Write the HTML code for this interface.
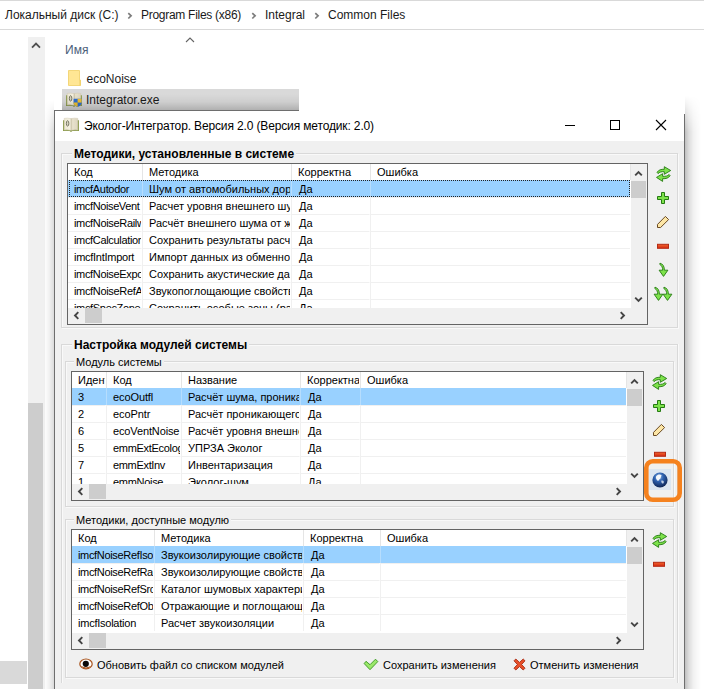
<!DOCTYPE html>
<html lang="ru">
<head>
<meta charset="utf-8">
<title>Эколог-Интегратор</title>
<style>
html,body{margin:0;padding:0;}
body{width:704px;height:689px;position:relative;overflow:hidden;background:#fff;font-family:"Liberation Sans",sans-serif;color:#000;}
.abs{position:absolute;}
.t{position:absolute;white-space:pre;line-height:1;}
/* explorer */
.ex{font-size:12px;color:#1a1a1a;}
/* dialog */
#dlg{position:absolute;left:55px;top:111px;width:629px;height:578px;background:#f0f0f0;}
.d{font-size:11px;}
.b{font-size:12px;font-weight:bold;}
.grp{position:absolute;box-sizing:border-box;border:1px solid #d9d9d9;box-shadow:1px 1px 0 rgba(255,255,255,.6), inset 1px 1px 0 rgba(255,255,255,.6);}
.lbl{position:absolute;background:#f0f0f0;white-space:pre;line-height:1;}
.lv{position:absolute;box-sizing:border-box;border:1px solid #646464;background:#fff;overflow:hidden;}
.lv .hd,.lv .r{position:absolute;left:0;height:17px;}
.lv .c{position:absolute;top:0;height:17px;box-sizing:border-box;overflow:hidden;white-space:pre;font-size:11px;line-height:17px;padding-left:6px;}
.lv .hd .c{border-right:1px solid #fff;box-shadow:1px 0 0 #e5e5e5;height:17px;line-height:16px;}
.lv .r .c{border-right:1px solid #fff;box-shadow:1px 0 0 #f0f0f0;border-top:1px solid #f0f0f0;line-height:16px;}
.fr{position:absolute;box-sizing:border-box;border:1px dotted #222;}
.lv .r.sel .c{background:#99d1ff;border-color:#99d1ff;box-shadow:1px 0 0 #b6ddfd;}
.sbv{position:absolute;top:0;width:16px;background:#f0f0f0;}
.sbh{position:absolute;left:0;height:16px;background:#f0f0f0;}
.th{position:absolute;background:#cdcdcd;}
svg{position:absolute;overflow:visible;}
</style>
</head>
<body>

<!-- ===== Explorer background ===== -->
<div class="abs" style="left:0;top:0;width:704px;height:1px;background:#d9d9d9"></div>
<div class="abs" style="left:0;top:29px;width:704px;height:1px;background:#d9d9d9"></div>
<div class="t ex" style="left:5px;top:9px;">Локальный диск (C:)</div>
<div class="t ex" style="left:141px;top:9px;letter-spacing:-0.28px">Program Files (x86)</div>
<div class="t ex" style="left:265px;top:9px;">Integral</div>
<div class="t ex" style="left:328px;top:9px;">Common Files</div>
<svg style="left:126.5px;top:11.8px" width="6" height="8" viewBox="0 0 6 8"><path d="M1.3 1.1 L4.1 3.8 L1.3 6.5" fill="none" stroke="#7c7c7c" stroke-width="1.7"/></svg>
<svg style="left:251.4px;top:11.8px" width="6" height="8" viewBox="0 0 6 8"><path d="M1.3 1.1 L4.1 3.8 L1.3 6.5" fill="none" stroke="#7c7c7c" stroke-width="1.7"/></svg>
<svg style="left:313.8px;top:11.8px" width="6" height="8" viewBox="0 0 6 8"><path d="M1.3 1.1 L4.1 3.8 L1.3 6.5" fill="none" stroke="#7c7c7c" stroke-width="1.7"/></svg>

<!-- left scrollbar -->
<div class="abs" style="left:28px;top:37px;width:17px;height:652px;background:#f0f0f0"></div>
<div class="abs" style="left:28px;top:403px;width:15px;height:286px;background:#cdcdcd"></div>
<svg style="left:31px;top:42px" width="10" height="7" viewBox="0 0 10 7"><path d="M1 5.6 L5 1.6 L9 5.6" fill="none" stroke="#505050" stroke-width="1.8"/></svg>
<div class="abs" style="left:0;top:661px;width:27px;height:23px;background:#d9d9d9"></div>

<!-- column header -->
<div class="t ex" style="left:65px;top:44px;color:#4c607a;">Имя</div>
<svg style="left:184.7px;top:36.8px" width="10" height="6" viewBox="0 0 10 6"><path d="M1 5 L5 1 L9 5" fill="none" stroke="#646464" stroke-width="1.1"/></svg>

<!-- folder row -->
<svg style="left:68px;top:70px" width="13" height="16" viewBox="0 0 13 16"><path d="M0.5 0.5 H11.5 V10 H12.5 V15.5 H0.5 Z" fill="#ffe694" stroke="#f3d679" stroke-width="1"/><path d="M11.5 10 H12.5 V15.5 H11.5Z" fill="#f0cd62"/></svg>
<div class="t ex" style="left:86.5px;top:73px;">ecoNoise</div>

<!-- selected file row -->
<div class="abs" style="left:62px;top:89px;width:237px;height:21px;background:#d9d9d9"></div>
<svg style="left:66px;top:92.6px" width="16" height="14" viewBox="0 0 16 14">
  <defs><linearGradient id="bk1" x1="0" y1="0" x2="1" y2="0"><stop offset="0" stop-color="#ece7d2"/><stop offset="0.42" stop-color="#f4f0e0"/><stop offset="0.52" stop-color="#cdc6ac"/><stop offset="0.62" stop-color="#e8e2cc"/><stop offset="1" stop-color="#dcd5be"/></linearGradient></defs>
  <path d="M0 2.2 H16 V13 H9.4 L8 13.9 L6.6 13 H0 Z" fill="#8b9b4b"/>
  <path d="M1.2 0.4 Q4.6 -0.2 8 0.6 Q11.4 -0.2 14.8 0.4 V12 Q11.4 11.6 8 12.3 Q4.6 11.6 1.2 12 Z" fill="url(#bk1)" stroke="#cfc6b0" stroke-width="0.5"/>
  <ellipse cx="4.6" cy="5.4" rx="1.25" ry="2.7" fill="#d9d5c0" stroke="#6c6c5a" stroke-width="0.9"/>
  <path d="M7.6 5.8 H15.6 V10 Q15.4 12.6 11.6 13.9 Q7.8 12.6 7.6 10 Z" fill="#2f6fd0"/>
  <path d="M11.6 5.8 H15.6 V9.6 H11.6 Z" fill="#f2c230"/><path d="M7.6 9.6 H11.6 V13.9 Q7.9 12.6 7.6 9.9 Z" fill="#f2c230"/>
</svg>
<div class="t ex" style="left:86px;top:94px;">Integrator.exe</div>

<!-- ===== Dialog ===== -->
<div class="abs" style="left:685px;top:96px;width:16px;height:593px;background:linear-gradient(to right,rgba(0,0,0,.25),rgba(0,0,0,.13) 25%,rgba(0,0,0,.05) 55%,rgba(0,0,0,0));-webkit-mask-image:linear-gradient(to bottom,transparent,#000 36px);mask-image:linear-gradient(to bottom,transparent,#000 36px)"></div>
<div class="abs" style="left:44px;top:100px;width:10px;height:589px;background:linear-gradient(to left,rgba(0,0,0,.14),rgba(0,0,0,.05) 50%,rgba(0,0,0,0));-webkit-mask-image:linear-gradient(to bottom,transparent,#000 30px);mask-image:linear-gradient(to bottom,transparent,#000 30px)"></div>
<div class="abs" style="left:54px;top:94px;width:245px;height:16px;background:linear-gradient(to bottom,rgba(0,0,0,0),rgba(0,0,0,.05) 50%,rgba(0,0,0,.19))"></div>
<div class="abs" style="left:54px;top:94px;width:8px;height:16px;background:#fff"></div>
<div class="abs" style="left:54px;top:110px;width:245px;height:1px;background:#6e6e6e"></div>
<div class="abs" style="left:54px;top:110px;width:1px;height:579px;background:#6e6e6e"></div>
<div class="abs" style="left:684px;top:114px;width:1px;height:575px;background:#6e6e6e"></div>
<div id="dlg"></div>
<div class="abs" style="left:55px;top:111px;width:629px;height:30px;background:#fff"></div>
<svg style="left:63px;top:118px" width="16" height="14" viewBox="0 0 16 14">
  <defs><linearGradient id="bk2" x1="0" y1="0" x2="1" y2="0"><stop offset="0" stop-color="#ece7d2"/><stop offset="0.42" stop-color="#f4f0e0"/><stop offset="0.52" stop-color="#cdc6ac"/><stop offset="0.62" stop-color="#e8e2cc"/><stop offset="1" stop-color="#dcd5be"/></linearGradient></defs>
  <path d="M0 2.2 H16 V13 H9.4 L8 13.9 L6.6 13 H0 Z" fill="#8b9b4b"/>
  <path d="M1.2 0.4 Q4.6 -0.2 8 0.6 Q11.4 -0.2 14.8 0.4 V12 Q11.4 11.6 8 12.3 Q4.6 11.6 1.2 12 Z" fill="url(#bk2)" stroke="#cfc6b0" stroke-width="0.5"/>
  <ellipse cx="4.6" cy="5.4" rx="1.25" ry="2.7" fill="#d9d5c0" stroke="#6c6c5a" stroke-width="0.9"/>
</svg>
<div class="t" style="left:84px;top:120.4px;font-size:12px;letter-spacing:-0.14px">Эколог-Интегратор. Версия 2.0 (Версия методик: 2.0)</div>
<div class="abs" style="left:565px;top:125px;width:10px;height:1px;background:#000"></div>
<div class="abs" style="left:610px;top:120px;width:10px;height:10px;box-sizing:border-box;border:1px solid #000"></div>
<svg style="left:656px;top:120px" width="10" height="10" viewBox="0 0 10 10"><path d="M0 0 L10 10 M10 0 L0 10" stroke="#000" stroke-width="1.1" fill="none"/></svg>
<div class="grp" style="left:61px;top:153px;width:617px;height:175px"></div>
<div class="lbl b" style="left:72px;top:148px;padding:0 2px">Методики, установленные в системе</div>
<div class="grp" style="left:61px;top:344px;width:617px;height:339px;border-bottom:0;box-shadow:1px 0 0 rgba(255,255,255,.6), inset 1px 1px 0 rgba(255,255,255,.6)"></div>
<div class="lbl b" style="left:72px;top:339px;padding:0 2px">Настройка модулей системы</div>
<div class="grp" style="left:65px;top:361px;width:609px;height:146px"></div>
<div class="lbl d" style="left:74px;top:357px;padding:0 2px">Модуль системы</div>
<div class="grp" style="left:65px;top:519px;width:609px;height:159px"></div>
<div class="lbl d" style="left:74px;top:515px;padding:0 2px">Методики, доступные модулю</div>
<div class="lv" style="left:67px;top:163px;width:581px;height:162px">
<div class="hd" style="top:0;width:563px;height:16px">
<div class="c" style="left:0px;width:74px;height:16px">Код</div>
<div class="c" style="left:75px;width:148px;height:16px">Методика</div>
<div class="c" style="left:224px;width:78px;height:16px">Корректна</div>
<div class="c" style="left:303px;width:259px;height:16px">Ошибка</div>
</div>
<div class="abs" style="left:0;top:16px;width:563px;height:128px;overflow:hidden">
<div class="r sel" style="top:0px;width:562px">
<div class="c" style="left:0px;width:74px;letter-spacing:-0.33px">imcfAutodor</div>
<div class="c" style="left:75px;width:148px">Шум от автомобильных дорог</div>
<div class="c" style="left:224px;width:78px;padding-left:7px">Да</div>
<div class="c" style="left:303px;width:259px;border-right:0;box-shadow:none"></div>
<div class="fr" style="left:1px;top:0;width:561px;height:17px"></div>
</div>
<div class="r" style="top:17px;width:562px">
<div class="c" style="left:0px;width:74px;letter-spacing:-0.38px">imcfNoiseVent</div>
<div class="c" style="left:75px;width:148px">Расчет уровня внешнего шума</div>
<div class="c" style="left:224px;width:78px;padding-left:7px">Да</div>
<div class="c" style="left:303px;width:259px;border-right:0;box-shadow:none"></div>
</div>
<div class="r" style="top:34px;width:562px">
<div class="c" style="left:0px;width:74px;letter-spacing:-0.33px">imcfNoiseRailway</div>
<div class="c" style="left:75px;width:148px">Расчёт внешнего шума от железных дорог</div>
<div class="c" style="left:224px;width:78px;padding-left:7px">Да</div>
<div class="c" style="left:303px;width:259px;border-right:0;box-shadow:none"></div>
</div>
<div class="r" style="top:51px;width:562px">
<div class="c" style="left:0px;width:74px;letter-spacing:-0.33px">imcfCalculationResult</div>
<div class="c" style="left:75px;width:148px">Сохранить результаты расчета</div>
<div class="c" style="left:224px;width:78px;padding-left:7px">Да</div>
<div class="c" style="left:303px;width:259px;border-right:0;box-shadow:none"></div>
</div>
<div class="r" style="top:68px;width:562px">
<div class="c" style="left:0px;width:74px;letter-spacing:-0.27px">imcfIntImport</div>
<div class="c" style="left:75px;width:148px">Импорт данных из обменного формата</div>
<div class="c" style="left:224px;width:78px;padding-left:7px">Да</div>
<div class="c" style="left:303px;width:259px;border-right:0;box-shadow:none"></div>
</div>
<div class="r" style="top:85px;width:562px">
<div class="c" style="left:0px;width:74px;letter-spacing:-0.33px">imcfNoiseExport</div>
<div class="c" style="left:75px;width:148px">Сохранить акустические данные</div>
<div class="c" style="left:224px;width:78px;padding-left:7px">Да</div>
<div class="c" style="left:303px;width:259px;border-right:0;box-shadow:none"></div>
</div>
<div class="r" style="top:102px;width:562px">
<div class="c" style="left:0px;width:74px;letter-spacing:-0.33px">imcfNoiseRefAbsorption</div>
<div class="c" style="left:75px;width:148px">Звукопоглощающие свойства</div>
<div class="c" style="left:224px;width:78px;padding-left:7px">Да</div>
<div class="c" style="left:303px;width:259px;border-right:0;box-shadow:none"></div>
</div>
<div class="r" style="top:119px;width:562px">
<div class="c" style="left:0px;width:74px;letter-spacing:-0.33px">imcfSpecZone</div>
<div class="c" style="left:75px;width:148px">Сохранить особые зоны (расчет)</div>
<div class="c" style="left:224px;width:78px;padding-left:7px">Да</div>
<div class="c" style="left:303px;width:259px;border-right:0;box-shadow:none"></div>
</div>
</div>
<div class="sbv" style="left:563px;width:16px;height:160px"></div>
<div class="sbh" style="top:144px;width:579px;height:16px"></div>
<div class="th" style="left:563px;top:17px;width:15px;height:17px"></div>
<div class="th" style="left:17px;top:144px;width:17px;height:15px"></div>
</div>
<svg style="left:634.0px;top:169.5px" width="9" height="7" viewBox="0 0 9 7"><g transform="rotate(0 4.5 3.5)"><path d="M1.2 5.3 L4.5 2 L7.8 5.3" fill="none" stroke="#454545" stroke-width="1.9"/></g></svg>
<svg style="left:634.0px;top:295.5px" width="9" height="7" viewBox="0 0 9 7"><g transform="rotate(180 4.5 3.5)"><path d="M1.2 5.3 L4.5 2 L7.8 5.3" fill="none" stroke="#454545" stroke-width="1.9"/></g></svg>
<svg style="left:71.5px;top:312.0px" width="9" height="7" viewBox="0 0 9 7"><g transform="rotate(270 4.5 3.5)"><path d="M1.2 5.3 L4.5 2 L7.8 5.3" fill="none" stroke="#454545" stroke-width="1.9"/></g></svg>
<svg style="left:617.5px;top:312.0px" width="9" height="7" viewBox="0 0 9 7"><g transform="rotate(90 4.5 3.5)"><path d="M1.2 5.3 L4.5 2 L7.8 5.3" fill="none" stroke="#454545" stroke-width="1.9"/></g></svg>
<div class="lv" style="left:71px;top:371px;width:573px;height:130px">
<div class="hd" style="top:0;width:555px;height:16px">
<div class="c" style="left:0px;width:34px;height:16px">Идентификатор</div>
<div class="c" style="left:35px;width:74px;height:16px">Код</div>
<div class="c" style="left:110px;width:118px;height:16px">Название</div>
<div class="c" style="left:229px;width:59px;height:16px">Корректна</div>
<div class="c" style="left:289px;width:265px;height:16px">Ошибка</div>
</div>
<div class="abs" style="left:0;top:16px;width:555px;height:96px;overflow:hidden">
<div class="r sel" style="top:0px;width:554px">
<div class="c" style="left:0px;width:34px">3</div>
<div class="c" style="left:35px;width:74px;letter-spacing:-0.1px">ecoOutfl</div>
<div class="c" style="left:110px;width:118px">Расчёт шума, проникающего из помещения</div>
<div class="c" style="left:229px;width:59px;padding-left:7px">Да</div>
<div class="c" style="left:289px;width:265px;border-right:0;box-shadow:none"></div>
</div>
<div class="r" style="top:17px;width:554px">
<div class="c" style="left:0px;width:34px">2</div>
<div class="c" style="left:35px;width:74px;letter-spacing:-0.1px">ecoPntr</div>
<div class="c" style="left:110px;width:118px">Расчёт проникающего шума</div>
<div class="c" style="left:229px;width:59px;padding-left:7px">Да</div>
<div class="c" style="left:289px;width:265px;border-right:0;box-shadow:none"></div>
</div>
<div class="r" style="top:34px;width:554px">
<div class="c" style="left:0px;width:34px">6</div>
<div class="c" style="left:35px;width:74px;letter-spacing:-0.13px">ecoVentNoise</div>
<div class="c" style="left:110px;width:118px">Расчёт уровня внешнего шума систем вентиляции</div>
<div class="c" style="left:229px;width:59px;padding-left:7px">Да</div>
<div class="c" style="left:289px;width:265px;border-right:0;box-shadow:none"></div>
</div>
<div class="r" style="top:51px;width:554px">
<div class="c" style="left:0px;width:34px">5</div>
<div class="c" style="left:35px;width:74px;letter-spacing:-0.3px">emmExtEcolog</div>
<div class="c" style="left:110px;width:118px">УПРЗА Эколог</div>
<div class="c" style="left:229px;width:59px;padding-left:7px">Да</div>
<div class="c" style="left:289px;width:265px;border-right:0;box-shadow:none"></div>
</div>
<div class="r" style="top:68px;width:554px">
<div class="c" style="left:0px;width:34px">7</div>
<div class="c" style="left:35px;width:74px;letter-spacing:-0.33px">emmExtInv</div>
<div class="c" style="left:110px;width:118px">Инвентаризация</div>
<div class="c" style="left:229px;width:59px;padding-left:7px">Да</div>
<div class="c" style="left:289px;width:265px;border-right:0;box-shadow:none"></div>
</div>
<div class="r" style="top:85px;width:554px">
<div class="c" style="left:0px;width:34px">1</div>
<div class="c" style="left:35px;width:74px;letter-spacing:-0.3px">emmNoise</div>
<div class="c" style="left:110px;width:118px">Эколог-шум</div>
<div class="c" style="left:229px;width:59px;padding-left:7px">Да</div>
<div class="c" style="left:289px;width:265px;border-right:0;box-shadow:none"></div>
</div>
</div>
<div class="sbv" style="left:555px;width:16px;height:128px"></div>
<div class="sbh" style="top:112px;width:571px;height:16px"></div>
<div class="th" style="left:555px;top:17px;width:15px;height:17px"></div>
<div class="th" style="left:17px;top:112px;width:17px;height:15px"></div>
</div>
<svg style="left:630.0px;top:377.5px" width="9" height="7" viewBox="0 0 9 7"><g transform="rotate(0 4.5 3.5)"><path d="M1.2 5.3 L4.5 2 L7.8 5.3" fill="none" stroke="#454545" stroke-width="1.9"/></g></svg>
<svg style="left:630.0px;top:471.5px" width="9" height="7" viewBox="0 0 9 7"><g transform="rotate(180 4.5 3.5)"><path d="M1.2 5.3 L4.5 2 L7.8 5.3" fill="none" stroke="#454545" stroke-width="1.9"/></g></svg>
<svg style="left:75.5px;top:488.0px" width="9" height="7" viewBox="0 0 9 7"><g transform="rotate(270 4.5 3.5)"><path d="M1.2 5.3 L4.5 2 L7.8 5.3" fill="none" stroke="#454545" stroke-width="1.9"/></g></svg>
<svg style="left:613.5px;top:488.0px" width="9" height="7" viewBox="0 0 9 7"><g transform="rotate(90 4.5 3.5)"><path d="M1.2 5.3 L4.5 2 L7.8 5.3" fill="none" stroke="#454545" stroke-width="1.9"/></g></svg>
<div class="lv" style="left:71px;top:529px;width:573px;height:121px">
<div class="hd" style="top:0;width:555px;height:16px">
<div class="c" style="left:0px;width:82px;height:16px">Код</div>
<div class="c" style="left:83px;width:148px;height:16px">Методика</div>
<div class="c" style="left:232px;width:76px;height:16px">Корректна</div>
<div class="c" style="left:309px;width:245px;height:16px">Ошибка</div>
</div>
<div class="abs" style="left:0;top:16px;width:555px;height:87px;overflow:hidden">
<div class="r sel" style="top:0px;width:554px">
<div class="c" style="left:0px;width:82px;letter-spacing:-0.33px">imcfNoiseRefIsolation</div>
<div class="c" style="left:83px;width:148px">Звукоизолирующие свойства</div>
<div class="c" style="left:232px;width:76px;padding-left:7px">Да</div>
<div class="c" style="left:309px;width:245px;border-right:0;box-shadow:none"></div>
</div>
<div class="r" style="top:17px;width:554px">
<div class="c" style="left:0px;width:82px;letter-spacing:-0.33px">imcfNoiseRefRails</div>
<div class="c" style="left:83px;width:148px">Звукоизолирующие свойства</div>
<div class="c" style="left:232px;width:76px;padding-left:7px">Да</div>
<div class="c" style="left:309px;width:245px;border-right:0;box-shadow:none"></div>
</div>
<div class="r" style="top:34px;width:554px">
<div class="c" style="left:0px;width:82px;letter-spacing:-0.33px">imcfNoiseRefSrc</div>
<div class="c" style="left:83px;width:148px">Каталог шумовых характеристик</div>
<div class="c" style="left:232px;width:76px;padding-left:7px">Да</div>
<div class="c" style="left:309px;width:245px;border-right:0;box-shadow:none"></div>
</div>
<div class="r" style="top:51px;width:554px">
<div class="c" style="left:0px;width:82px;letter-spacing:-0.33px">imcfNoiseRefObstacle</div>
<div class="c" style="left:83px;width:148px">Отражающие и поглощающие свойства</div>
<div class="c" style="left:232px;width:76px;padding-left:7px">Да</div>
<div class="c" style="left:309px;width:245px;border-right:0;box-shadow:none"></div>
</div>
<div class="r" style="top:68px;width:554px">
<div class="c" style="left:0px;width:82px;letter-spacing:-0.24px">imcfIsolation</div>
<div class="c" style="left:83px;width:148px">Расчет звукоизоляции</div>
<div class="c" style="left:232px;width:76px;padding-left:7px">Да</div>
<div class="c" style="left:309px;width:245px;border-right:0;box-shadow:none"></div>
</div>
</div>
<div class="sbv" style="left:555px;width:16px;height:119px"></div>
<div class="sbh" style="top:103px;width:571px;height:16px"></div>
<div class="th" style="left:555px;top:17px;width:15px;height:17px"></div>
<div class="th" style="left:17px;top:103px;width:17px;height:15px"></div>
</div>
<svg style="left:630.0px;top:535.5px" width="9" height="7" viewBox="0 0 9 7"><g transform="rotate(0 4.5 3.5)"><path d="M1.2 5.3 L4.5 2 L7.8 5.3" fill="none" stroke="#454545" stroke-width="1.9"/></g></svg>
<svg style="left:630.0px;top:620.5px" width="9" height="7" viewBox="0 0 9 7"><g transform="rotate(180 4.5 3.5)"><path d="M1.2 5.3 L4.5 2 L7.8 5.3" fill="none" stroke="#454545" stroke-width="1.9"/></g></svg>
<svg style="left:75.5px;top:637.0px" width="9" height="7" viewBox="0 0 9 7"><g transform="rotate(270 4.5 3.5)"><path d="M1.2 5.3 L4.5 2 L7.8 5.3" fill="none" stroke="#454545" stroke-width="1.9"/></g></svg>
<svg style="left:613.5px;top:637.0px" width="9" height="7" viewBox="0 0 9 7"><g transform="rotate(90 4.5 3.5)"><path d="M1.2 5.3 L4.5 2 L7.8 5.3" fill="none" stroke="#454545" stroke-width="1.9"/></g></svg>
<svg style="left:656px;top:166px" width="16" height="16" viewBox="0 0 16 16">
<path d="M8.3 0.7 L14.7 4.5 L8.3 8.3 L8.3 5.7 C5.6 5.4 3.4 6.1 2 7.6 L1.1 6.3 C2.6 3.9 5.2 3.1 8.3 3.3 Z" fill="#7de24a" stroke="#257a12" stroke-width="0.9" stroke-linejoin="round"/>
<path d="M6.6 15.4 L0.5 11.4 L6.6 7.7 L6.6 10.3 C9.5 10.6 11.7 10 13.1 8.5 L14.1 9.7 C12.6 12 10 12.9 6.6 12.7 Z" fill="#7de24a" stroke="#257a12" stroke-width="0.9" stroke-linejoin="round"/>
</svg>
<svg style="left:655px;top:190px" width="16" height="16" viewBox="0 0 16 16">
<path d="M6.5 2.5 H9.5 V6.5 H13.5 V9.5 H9.5 V13.5 H6.5 V9.5 H2.5 V6.5 H6.5 Z" fill="#7de24a" stroke="#257a12" stroke-width="1" stroke-linejoin="round"/>
</svg>
<svg style="left:655px;top:214px" width="16" height="16" viewBox="0 0 16 16">
<path d="M10.4 2.4 L13.6 5.6 L5.6 13.5 L2.5 13.5 L2.5 10.4 Z" fill="#fde6a6" stroke="#6a4a22" stroke-width="1" stroke-linejoin="miter"/>
</svg>
<svg style="left:655px;top:238px" width="16" height="16" viewBox="0 0 16 16">
<defs><linearGradient id="mg655238" x1="0" y1="0" x2="0" y2="1"><stop offset="0" stop-color="#f0652e"/><stop offset="1" stop-color="#d62a12"/></linearGradient></defs>
<rect x="2.5" y="6.3" width="11" height="4" fill="url(#mg655238)" stroke="#b42a14" stroke-width="1"/>
</svg>
<svg style="left:659px;top:262.3px" width="10" height="16" viewBox="0 0 10 16">
<path d="M1 1.2 C3.6 1.8 5.4 4 5.4 8.2 L8.9 8.2 L4.5 14.4 L0.1 8.2 L3.7 8.2 C3.7 5.6 2.8 3.6 0.7 2.3 Z" fill="#7de24a" stroke="#257a12" stroke-width="0.9" stroke-linejoin="round"/>
</svg>
<svg style="left:654px;top:286.3px" width="19" height="16" viewBox="0 0 19 16">
<path d="M1 1.2 C3.6 1.8 5.4 4 5.4 8.2 L8.9 8.2 L4.5 14.4 L0.1 8.2 L3.7 8.2 C3.7 5.6 2.8 3.6 0.7 2.3 Z" fill="#7de24a" stroke="#257a12" stroke-width="0.9" stroke-linejoin="round"/>
<path d="M1 1.2 C3.6 1.8 5.4 4 5.4 8.2 L8.9 8.2 L4.5 14.4 L0.1 8.2 L3.7 8.2 C3.7 5.6 2.8 3.6 0.7 2.3 Z" transform="translate(9 0)" fill="#7de24a" stroke="#257a12" stroke-width="0.9" stroke-linejoin="round"/>
</svg>
<svg style="left:652px;top:374px" width="16" height="16" viewBox="0 0 16 16">
<path d="M8.3 0.7 L14.7 4.5 L8.3 8.3 L8.3 5.7 C5.6 5.4 3.4 6.1 2 7.6 L1.1 6.3 C2.6 3.9 5.2 3.1 8.3 3.3 Z" fill="#7de24a" stroke="#257a12" stroke-width="0.9" stroke-linejoin="round"/>
<path d="M6.6 15.4 L0.5 11.4 L6.6 7.7 L6.6 10.3 C9.5 10.6 11.7 10 13.1 8.5 L14.1 9.7 C12.6 12 10 12.9 6.6 12.7 Z" fill="#7de24a" stroke="#257a12" stroke-width="0.9" stroke-linejoin="round"/>
</svg>
<svg style="left:651px;top:398px" width="16" height="16" viewBox="0 0 16 16">
<path d="M6.5 2.5 H9.5 V6.5 H13.5 V9.5 H9.5 V13.5 H6.5 V9.5 H2.5 V6.5 H6.5 Z" fill="#7de24a" stroke="#257a12" stroke-width="1" stroke-linejoin="round"/>
</svg>
<svg style="left:651px;top:422px" width="16" height="16" viewBox="0 0 16 16">
<path d="M10.4 2.4 L13.6 5.6 L5.6 13.5 L2.5 13.5 L2.5 10.4 Z" fill="#fde6a6" stroke="#6a4a22" stroke-width="1" stroke-linejoin="miter"/>
</svg>
<svg style="left:652px;top:446px" width="16" height="16" viewBox="0 0 16 16">
<defs><linearGradient id="mg652446" x1="0" y1="0" x2="0" y2="1"><stop offset="0" stop-color="#f0652e"/><stop offset="1" stop-color="#d62a12"/></linearGradient></defs>
<rect x="2.5" y="6.3" width="11" height="4" fill="url(#mg652446)" stroke="#b42a14" stroke-width="1"/>
</svg>
<div class="abs" style="left:649px;top:469px;width:22px;height:21px;background:#dce6f1;"></div>
<svg style="left:652.3px;top:472.3px" width="16" height="16" viewBox="0 0 16 16">
<defs><radialGradient id="gl" cx="0.42" cy="0.3" r="0.75"><stop offset="0" stop-color="#8db6e6"/><stop offset="0.4" stop-color="#2f62b0"/><stop offset="1" stop-color="#0b1e4a"/></radialGradient></defs>
<circle cx="8" cy="8" r="7.6" fill="url(#gl)"/>
<path d="M4.2 4.2 C5.5 2.4 8 2 9.3 3 C10 4 8.6 4.6 8.8 5.6 C9 6.8 7.4 6.8 7 8 C6.6 9.2 5.2 8.6 4.6 7.4 C4 6.4 3.6 5.2 4.2 4.2Z" fill="#fff" opacity="0.92"/>
<path d="M9.4 8.6 C10.8 8 12.2 8.8 11.8 10.4 C11.4 11.8 10 12 9.6 10.8 C9.4 10 9 9.2 9.4 8.6Z" fill="#e6eef8" opacity="0.8"/>
</svg>
<svg style="left:640px;top:455px" width="46" height="51" viewBox="0 0 46 51"><rect x="6.3" y="6.3" width="33.4" height="38.4" rx="6.5" fill="none" stroke="#f5821f" stroke-width="4.6"/></svg>
<svg style="left:652px;top:532px" width="16" height="16" viewBox="0 0 16 16">
<path d="M8.3 0.7 L14.7 4.5 L8.3 8.3 L8.3 5.7 C5.6 5.4 3.4 6.1 2 7.6 L1.1 6.3 C2.6 3.9 5.2 3.1 8.3 3.3 Z" fill="#7de24a" stroke="#257a12" stroke-width="0.9" stroke-linejoin="round"/>
<path d="M6.6 15.4 L0.5 11.4 L6.6 7.7 L6.6 10.3 C9.5 10.6 11.7 10 13.1 8.5 L14.1 9.7 C12.6 12 10 12.9 6.6 12.7 Z" fill="#7de24a" stroke="#257a12" stroke-width="0.9" stroke-linejoin="round"/>
</svg>
<svg style="left:651px;top:556px" width="16" height="16" viewBox="0 0 16 16">
<defs><linearGradient id="mg651556" x1="0" y1="0" x2="0" y2="1"><stop offset="0" stop-color="#f0652e"/><stop offset="1" stop-color="#d62a12"/></linearGradient></defs>
<rect x="2.5" y="6.3" width="11" height="4" fill="url(#mg651556)" stroke="#b42a14" stroke-width="1"/>
</svg>
<svg style="left:79px;top:658px" width="14" height="12" viewBox="0 0 14 12">
<ellipse cx="7" cy="5.9" rx="6.2" ry="4.9" fill="#fff" stroke="#a8541e" stroke-width="1.2"/>
<path d="M1.2 7.6 Q7 13.4 12.8 7.6 Q7 11.2 1.2 7.6Z" fill="#a8541e"/>
<circle cx="6.8" cy="5.8" r="3.1" fill="#0a0a0a"/>
</svg>
<div class="t d" style="left:97px;top:660px">Обновить файл со списком модулей</div>
<svg style="left:363px;top:658px" width="15" height="13" viewBox="0 0 15 13">
<path d="M1.2 5.6 L3 3.3 L7 6.7 L12.5 1.2 L14.8 3.6 L7 11.7 Z" fill="#9be86a" stroke="#35951d" stroke-width="0.9" stroke-linejoin="round"/>
</svg>
<div class="t d" style="left:383px;top:660px">Сохранить изменения</div>
<svg style="left:512.6px;top:657.6px" width="13" height="13" viewBox="0 0 13 13">
<path d="M1 2.8 L2.8 1 L6.5 4.4 L10.2 1 L12 2.8 L8.6 6.5 L12 10.2 L10.2 12 L6.5 8.6 L2.8 12 L1 10.2 L4.4 6.5 Z" fill="#e8502a" stroke="#a82c14" stroke-width="0.9" stroke-linejoin="round"/>
</svg>
<div class="t d" style="left:530px;top:660px">Отменить изменения</div>
</body>
</html>
